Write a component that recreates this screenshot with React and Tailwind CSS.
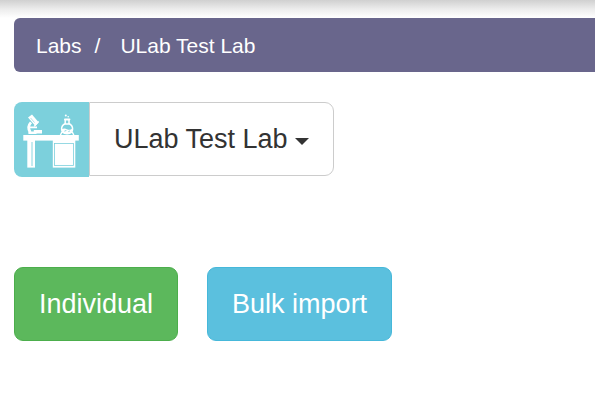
import React from "react";

const LabIcon = () => (
  <svg viewBox="0 0 75 75" className="block h-full w-full" aria-hidden="true">
    <g fill="#fff">
      {/* Desk */}
      <rect x="9.3" y="33" width="55.5" height="5.6" />
      <rect x="13.3" y="38" width="7.7" height="27.6" />
      <rect x="38.8" y="38" width="22.5" height="27.6" />
      {/* Flask */}
      <rect x="50" y="16.4" width="6.4" height="2" rx="0.8" />
      <circle cx="51.8" cy="13.6" r="1" />
      <circle cx="54.2" cy="14.8" r="0.8" />
      <path d="M47.6 27.2q2.8-1.6 5.4 0t5.4-.6q.2 4.4-5.2 4.9-5.2-.2-5.6-4.3z" />
      {/* Microscope */}
      <path d="M14 15.4l4-2.8 6.8 8-3.4 3.4z" />
      <path d="M14.4 32v-2.4h5.4v-1.6h8.2v3.4h-4.6l-1.8.6z" />
    </g>
    <g fill="none" stroke="#fff">
      <path d="M17 20.4q-4.2 4.4-.8 9.8" strokeWidth="2.8" />
      <path d="M16 25.4h7" strokeWidth="1.6" />
      <path d="M24.6 19.4l-4.4 5" strokeWidth="1.4" />
      <path
        d="M51.2 18v3.8q-3.6 1.4-3.6 5.2 0 4.4 5.5 4.7 5.5-.3 5.5-4.7 0-3.8-3.6-5.2v-3.8M49.8 22h6.6M48 30l-1.6 3M58.2 30l1.6 3"
        strokeWidth="1.5"
      />
    </g>
    <g fill="none" stroke="#7cd0dc">
      <path d="M18 40v24" strokeWidth="0.9" />
      <rect x="40.4" y="41.4" width="19" height="22" strokeWidth="0.8" />
      <path d="M16.6 16l4 4.6" strokeWidth="0.6" />
      <path d="M50.4 29.2l2-.8M54.4 29.6l1.4-.6" strokeWidth="0.9" />
    </g>
  </svg>
);

const App = () => {
  return (
    <div className="min-h-screen bg-white font-['Liberation_Sans',Arial,sans-serif] text-[#333]">
      {/* Shadow of the top navbar */}
      <div className="h-[18px] bg-linear-to-b from-[#d0d0d0] via-[#ececec] to-white" />

      <main className="pl-[14px]">
        <nav aria-label="Breadcrumb" className="rounded-l-md bg-[#69668c] px-[22px] pt-[13px] pb-[11px] text-[21px] leading-[30px] text-white">
          <ol className="flex">
            <li>
              <a href="#labs">Labs</a>
            </li>
            <li aria-hidden="true" className="pr-5 pl-[13px]">/</li>
            <li aria-current="page">ULab Test Lab</li>
          </ol>
        </nav>

        <div className="mt-[30px] flex items-start">
          <div className="size-[75px] overflow-hidden rounded-l-lg bg-[#7cd0dc]">
            <LabIcon />
          </div>
          <button
            type="button"
            aria-haspopup="menu"
            className="flex h-[74px] items-center gap-[7px] rounded-r-[9px] border border-[#ccc] bg-white px-6 text-[27px] leading-9"
          >
            ULab Test Lab
            <svg viewBox="0 0 14 7" className="mt-1 h-[7px] w-[14px]" fill="currentColor" aria-hidden="true">
              <path d="M0 0h14L7 7z" />
            </svg>
          </button>
        </div>

        <div className="mt-[90px] flex gap-[29px]">
          <button
            type="button"
            className="h-[74px] rounded-[9px] border border-[#4cae4c] bg-[#5cb85c] px-6 text-[27px] leading-9 text-white"
          >
            Individual
          </button>
          <button
            type="button"
            className="h-[74px] rounded-[9px] border border-[#46b8da] bg-[#5bc0de] px-6 text-[27px] leading-9 text-white"
          >
            Bulk import
          </button>
        </div>
      </main>
    </div>
  );
};

export default App;
